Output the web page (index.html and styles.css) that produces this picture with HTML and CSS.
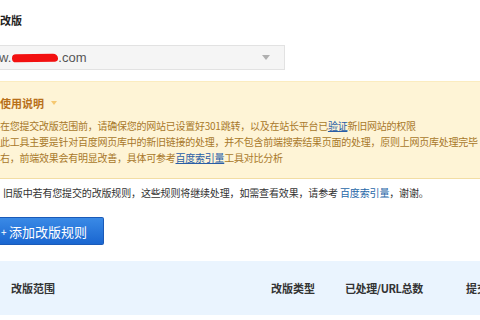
FILE: index.html
```html
<!DOCTYPE html>
<html lang="zh">
<head>
<meta charset="utf-8">
<link rel="stylesheet" href="styles.css">
</head>
<body>
<div class="page">
  <div class="title">改版</div>
  <div class="select">
    <span class="site">w.<span class="scribble"></span>.com</span>
    <span class="caret"></span>
  </div>
  <div class="notice">
    <div class="notice-title">使用说明 <span class="mini-caret"></span></div>
    <p class="line">在您提交改版范围前，请确保您的网站已设置好301跳转，以及在站长平台已<a class="ulink">验证</a>新旧网站的权限</p>
    <p class="line">此工具主要是针对百度网页库中的新旧链接的处理，并不包含前端搜索结果页面的处理，原则上网页库处理完毕</p>
    <p class="line">右，前端效果会有明显改善，具体可参考<a class="ulink">百度索引量</a>工具对比分析</p>
  </div>
  <p class="desc">旧版中若有您提交的改版规则，这些规则将继续处理，如需查看效果，请参考 <a class="link">百度索引量</a>，谢谢。</p>
  <div class="btn"><span class="plus">+</span>添加改版规则</div>
  <div class="thead">
    <span>改版范围</span>
    <span>改版类型</span>
    <span class="tight">已处理/URL总数</span>
    <span>提交</span>
  </div>
</div>
</body>
</html>
```
FILE: styles.css
```css
html, body {
  margin: 0;
  padding: 0;
  background: #fff;
}
.page {
  width: 480px;
  height: 320px;
  overflow: hidden;
  font-family: "Noto Sans CJK SC", "Liberation Sans", sans-serif;
  color: #333;
  display: flex;
  flex-direction: column;
}
.title {
  margin-top: 12px;
  height: 16px;
  line-height: 16px;
  font-size: 11px;
  font-weight: bold;
  color: #222;
}
.select {
  margin-top: 17px;
  width: 285px;
  height: 25px;
  box-sizing: border-box;
  border: 1px solid #e2e2e2;
  border-left: none;
  background: #f5f5f5;
  display: flex;
  align-items: center;
  justify-content: space-between;
  padding-right: 14px;
}
.site {
  font-family: "Liberation Sans", Arial, sans-serif;
  font-size: 13px;
  color: #555;
  margin-left: -1px;
  display: flex;
  align-items: center;
}
.scribble {
  display: inline-block;
  width: 46px;
  height: 8px;
  background: #f21010;
  border-radius: 4px 5px 3px 4px;
  margin: 0 0 0 1px;
  transform: rotate(-1deg);
}
.caret {
  width: 0;
  height: 0;
  border-left: 4px solid transparent;
  border-right: 4px solid transparent;
  border-top: 5px solid #b0b0b0;
}
.notice {
  margin-top: 11px;
  width: 480px;
  box-sizing: border-box;
  background: #fef4d6;
  border-top: 1px solid #fbecc0;
  border-bottom: 1px solid #f2dda4;
  padding: 13px 0 12px 0;
  color: #a8782a;
  font-size: 10px;
  letter-spacing: -0.25px;
}
.notice-title {
  height: 16px;
  line-height: 16px;
  font-size: 11px;
  font-weight: bold;
  color: #b8701a;
  letter-spacing: 0;
  display: flex;
  align-items: center;
  gap: 7px;
}
.mini-caret {
  width: 0;
  height: 0;
  border-left: 3.5px solid transparent;
  border-right: 3.5px solid transparent;
  border-top: 4px solid #f6c870;
}
.line {
  margin: 0;
  height: 16px;
  line-height: 16px;
  white-space: nowrap;
}
.notice-title + .line {
  margin-top: 7px;
}
.ulink {
  color: #2a5ea6;
  text-decoration: underline;
}
.desc {
  margin: 6px 0 0 0;
  padding-left: 3px;
  height: 16px;
  line-height: 16px;
  font-size: 10px;
  color: #333;
  letter-spacing: -0.15px;
  white-space: nowrap;
}
.link {
  color: #1f67a8;
}
.btn {
  margin-top: 16px;
  width: 104px;
  height: 28px;
  box-sizing: border-box;
  background: linear-gradient(#3a8ae6, #1a66d0);
  border: 1px solid #1a5ab8;
  border-left: none;
  border-radius: 0 2px 2px 0;
  color: #fff;
  font-size: 13px;
  display: flex;
  align-items: center;
  white-space: nowrap;
}
.plus {
  margin-left: 1px;
  width: 8px;
  font-size: 10px;
}
.thead {
  margin-top: 16px;
  height: 54px;
  background: #eaf4fe;
  display: grid;
  grid-template-columns: 260px 74px 121px 1fr;
  padding-left: 11px;
  align-items: center;
  font-size: 11px;
  font-weight: bold;
  color: #333;
  white-space: nowrap;
  overflow: hidden;
}
.tight {
  letter-spacing: -0.4px;
}
```
